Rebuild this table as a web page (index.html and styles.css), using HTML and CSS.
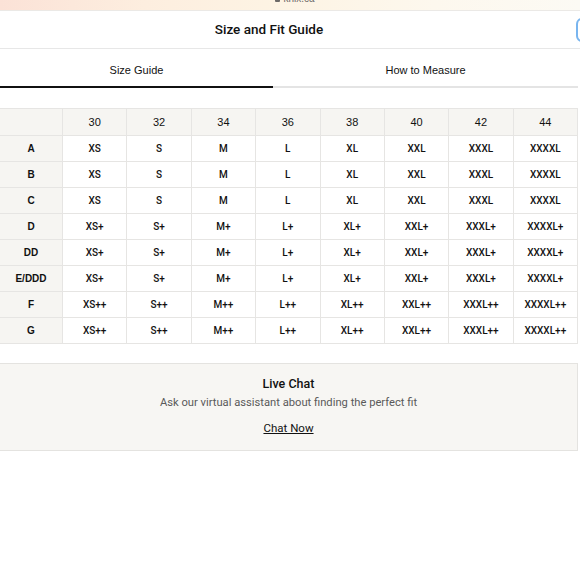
FILE: index.html
```html
<!DOCTYPE html>
<html lang="en">
<head>
<meta charset="utf-8">
<title>Size and Fit Guide</title>
<link rel="stylesheet" href="styles.css">
</head>
<body>
<div class="urlbar"><span class="url"><span class="lock"></span>knix.ca</span></div>
<main class="sheet">
  <header class="header">
    <h1 class="title">Size and Fit Guide</h1>
    <button class="close" aria-label="Close"></button>
  </header>
  <nav class="tabs">
    <div class="tab active">Size Guide</div>
    <div class="tab">How to Measure</div>
  </nav>
  <table class="sizes">
    <thead>
      <tr><th class="corner"></th><th>30</th><th>32</th><th>34</th><th>36</th><th>38</th><th>40</th><th>42</th><th>44</th></tr>
    </thead>
    <tbody>
      <tr><th>A</th><td>XS</td><td>S</td><td>M</td><td>L</td><td>XL</td><td>XXL</td><td>XXXL</td><td>XXXXL</td></tr>
      <tr><th>B</th><td>XS</td><td>S</td><td>M</td><td>L</td><td>XL</td><td>XXL</td><td>XXXL</td><td>XXXXL</td></tr>
      <tr><th>C</th><td>XS</td><td>S</td><td>M</td><td>L</td><td>XL</td><td>XXL</td><td>XXXL</td><td>XXXXL</td></tr>
      <tr><th>D</th><td>XS+</td><td>S+</td><td>M+</td><td>L+</td><td>XL+</td><td>XXL+</td><td>XXXL+</td><td>XXXXL+</td></tr>
      <tr><th>DD</th><td>XS+</td><td>S+</td><td>M+</td><td>L+</td><td>XL+</td><td>XXL+</td><td>XXXL+</td><td>XXXXL+</td></tr>
      <tr><th>E/DDD</th><td>XS+</td><td>S+</td><td>M+</td><td>L+</td><td>XL+</td><td>XXL+</td><td>XXXL+</td><td>XXXXL+</td></tr>
      <tr><th>F</th><td>XS++</td><td>S++</td><td>M++</td><td>L++</td><td>XL++</td><td>XXL++</td><td>XXXL++</td><td>XXXXL++</td></tr>
      <tr><th>G</th><td>XS++</td><td>S++</td><td>M++</td><td>L++</td><td>XL++</td><td>XXL++</td><td>XXXL++</td><td>XXXXL++</td></tr>
    </tbody>
  </table>
  <section class="chat">
    <h2 class="chat-title">Live Chat</h2>
    <p class="chat-text">Ask our virtual assistant about finding the perfect fit</p>
    <a class="chat-link" href="#">Chat Now</a>
  </section>
</main>
</body>
</html>
```

FILE: styles.css
```css
html, body {
  margin: 0;
  padding: 0;
  background: #ffffff;
  overflow: hidden;
}
body {
  font-family: "Liberation Sans", Arial, sans-serif;
  color: #111;
  width: 580px;
}
.urlbar {
  height: 10px;
  overflow: hidden;
  background: linear-gradient(90deg, #fbe2d7 0%, #fdeedf 25%, #fdf4e4 50%, #fdf8ee 75%, #fcfaf4 100%);
  border-bottom: 1px solid #ebe9e6;
  display: flex;
  justify-content: center;
  align-items: flex-start;
}
.url {
  font-size: 10px;
  line-height: 10px;
  height: 10px;
  margin-top: -6px;
  color: #6c6a68;
  display: flex;
  align-items: flex-end;
  gap: 3px;
  margin-left: 10px;
}
.lock {
  width: 5px;
  height: 5px;
  background: #6c6a68;
  border-radius: 1px;
  margin-bottom: 2px;
}
.sheet {
  width: 578px;
}
.header {
  display: grid;
  grid-template-columns: 538px 1fr;
  align-items: center;
  height: 37px;
  border-bottom: 1px solid #e7e7e7;
  width: 580px;
}
.title {
  margin: 0 0 2px;
  text-align: center;
  font-family: Roboto, "Liberation Sans", sans-serif;
  font-weight: 500;
  font-size: 13.5px;
  color: #111;
}
.close {
  justify-self: end;
  width: 24px;
  height: 24px;
  margin-right: -20px;
  border: 2px solid #79b5ef;
  border-radius: 6px;
  background: #fff;
  padding: 0;
}
.tabs {
  display: grid;
  grid-template-columns: 273px 1fr;
  height: 39px;
}
.tab {
  display: flex;
  align-items: center;
  justify-content: center;
  font-size: 11px;
  color: #111;
  border-bottom: 2px solid #e4e4e4;
  padding-top: 5px;
}
.tab.active {
  border-bottom-color: #111;
}
.sizes {
  margin-top: 20px;
  width: 578px;
  border-collapse: collapse;
  table-layout: fixed;
  font-family: Roboto, "Liberation Sans", sans-serif;
}
.sizes tr {
  height: 26px;
}
.sizes th, .sizes td {
  border: 1px solid #e6e5e3;
  padding: 0;
  text-align: center;
  font-size: 10px;
}
.sizes thead tr {
  height: 27px;
}
.sizes thead th {
  background: #f6f5f2;
  font-weight: 400;
  font-size: 11px;
  font-family: "Liberation Sans", Arial, sans-serif;
}
.sizes thead th.corner {
  width: 62px;
}
.sizes tbody th {
  background: #f6f5f2;
  font-weight: 700;
  font-family: "Liberation Sans", Arial, sans-serif;
  font-size: 10px;
}
.sizes td {
  font-weight: 500;
  color: #111;
}
.sizes tr > :first-child {
  border-left: none;
}
.chat {
  margin-top: 19px;
  background: #f7f6f3;
  border: 1px solid #e4e3e0;
  border-left: none;
  display: flex;
  flex-direction: column;
  align-items: center;
  padding-top: 13px;
  box-sizing: border-box;
  height: 88px;
}
.chat-title {
  margin: 0;
  font-family: Roboto, "Liberation Sans", sans-serif;
  font-weight: 500;
  font-size: 12.5px;
  line-height: 14px;
  color: #111;
}
.chat-text {
  margin: 5px 0 0;
  font-family: Roboto, "Liberation Sans", sans-serif;
  font-size: 11.2px;
  line-height: 14px;
  color: #5a5a5a;
}
.chat-link {
  margin-top: 11px;
  font-family: Roboto, "Liberation Sans", sans-serif;
  font-size: 11.5px;
  line-height: 14px;
  color: #111;
  text-decoration: underline;
}
```
